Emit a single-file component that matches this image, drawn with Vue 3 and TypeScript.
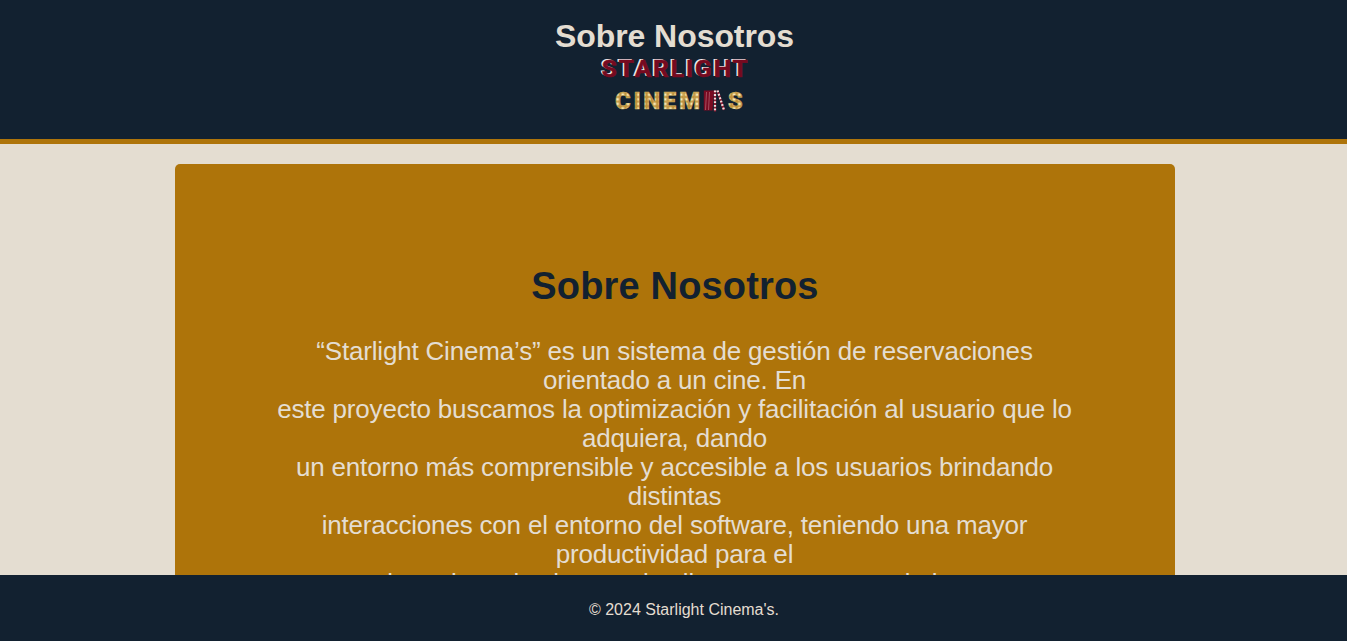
<script setup lang="ts">
const title = 'Sobre Nosotros'
const lines: string[] = [
  '“Starlight Cinema’s” es un sistema de gestión de reservaciones orientado a un cine. En',
  'este proyecto buscamos la optimización y facilitación al usuario que lo adquiera, dando',
  'un entorno más comprensible y accesible a los usuarios brindando distintas',
  'interacciones con el entorno del software, teniendo una mayor productividad para el',
]
const closing = 'usuario real que los busca al sello con su proceso de la tarea'
</script>

<template>
  <div class="page">
    <header class="header">
      <h1>{{ title }}</h1>
      <svg class="logo" viewBox="0 0 150 62" role="img" aria-label="Starlight Cinemas">
        <defs>
          <pattern id="bulbs" width="5.3" height="4.6" patternUnits="userSpaceOnUse">
            <rect width="5.3" height="4.6" fill="#c0913a" />
            <circle cx="2.6" cy="2.3" r="1.9" fill="#dcc07a" />
            <circle cx="2.6" cy="2.3" r="1" fill="#fdf3c8" />
          </pattern>
        </defs>
        <g class="star">
          <text x="1" y="24.6" textLength="146" fill="#efe6ea">STARLIGHT</text>
          <text class="face" x="2.8" y="25.7" textLength="146">STARLIGHT</text>
        </g>
        <g class="cinema">
          <text x="16" y="58" textLength="85">CINEM</text>
          <text x="128.8" y="58">S</text>
        </g>
        <path d="M104.8 39.5H115L113.5 59.5H104.8Z" fill="#790b22" />
        <path d="M107.5 41L106.5 59M110.5 41L109.5 59" stroke="#b96a79" stroke-width=".7" />
        <path d="M116 39.5V60.5M118.5 39.5L125 59" stroke="#8b1930" stroke-width="2.2" />
        <path d="M116 39.5V60.5M118.5 39.5L125 59" stroke="#f5dedc" stroke-width="2.2" stroke-dasharray="1.8 1.8" />
      </svg>
    </header>
    <main class="card">
      <h2>{{ title }}</h2>
      <p><template v-for="line in lines" :key="line">{{ line }}<br /></template></p>
      <p class="closing">{{ closing }}</p>
    </main>
    <footer class="footer">© 2024 Starlight Cinema's.</footer>
  </div>
</template>

<style>
body { margin: 0; overflow: hidden; background: #e4ddd1; }
</style>

<style scoped>
.page { height: 641px; display: flex; flex-direction: column; overflow: hidden; font-family: "Liberation Sans", Arial, sans-serif; text-align: center; background: #e4ddd1; color: #e4ddd1; }
.header { box-sizing: border-box; flex: 0 0 144px; padding-top: 18px; background: #122130; border-bottom: 5px solid #ae740a; display: flex; flex-direction: column; align-items: center; }
h1 { margin: 0 0 0 2px; font-size: 32px; line-height: 36px; letter-spacing: -.06px; }
.logo { width: 150px; height: 62px; margin-top: -3px; overflow: visible; }
.star, .cinema { font-family: Roboto, sans-serif; font-weight: 700; font-size: 24.5px; }
.face { fill: #760a20; stroke: #760a20; stroke-width: .5px; }
.cinema { font-weight: 900; font-size: 24px; fill: url(#bulbs); stroke: #d5b565; stroke-width: .4px; }
.card { box-sizing: border-box; width: 1000px; flex: 1; min-height: 0; margin: 20px 0 0 175px; padding: 100px 100px 0; overflow: hidden; border-radius: 5px 5px 0 0; background: #ae740a; }
h2 { margin: 0; font-size: 38px; line-height: 44px; letter-spacing: .16px; color: #122130; }
p { margin: 29px 1px 0 0; font-size: 26px; line-height: 29px; letter-spacing: -.185px; }
.closing { margin: 0 10px 0 0; }
.footer { box-sizing: border-box; flex: 0 0 66px; padding: 26px 0 0 21px; background: #122130; font-size: 16px; line-height: 18px; }
</style>
